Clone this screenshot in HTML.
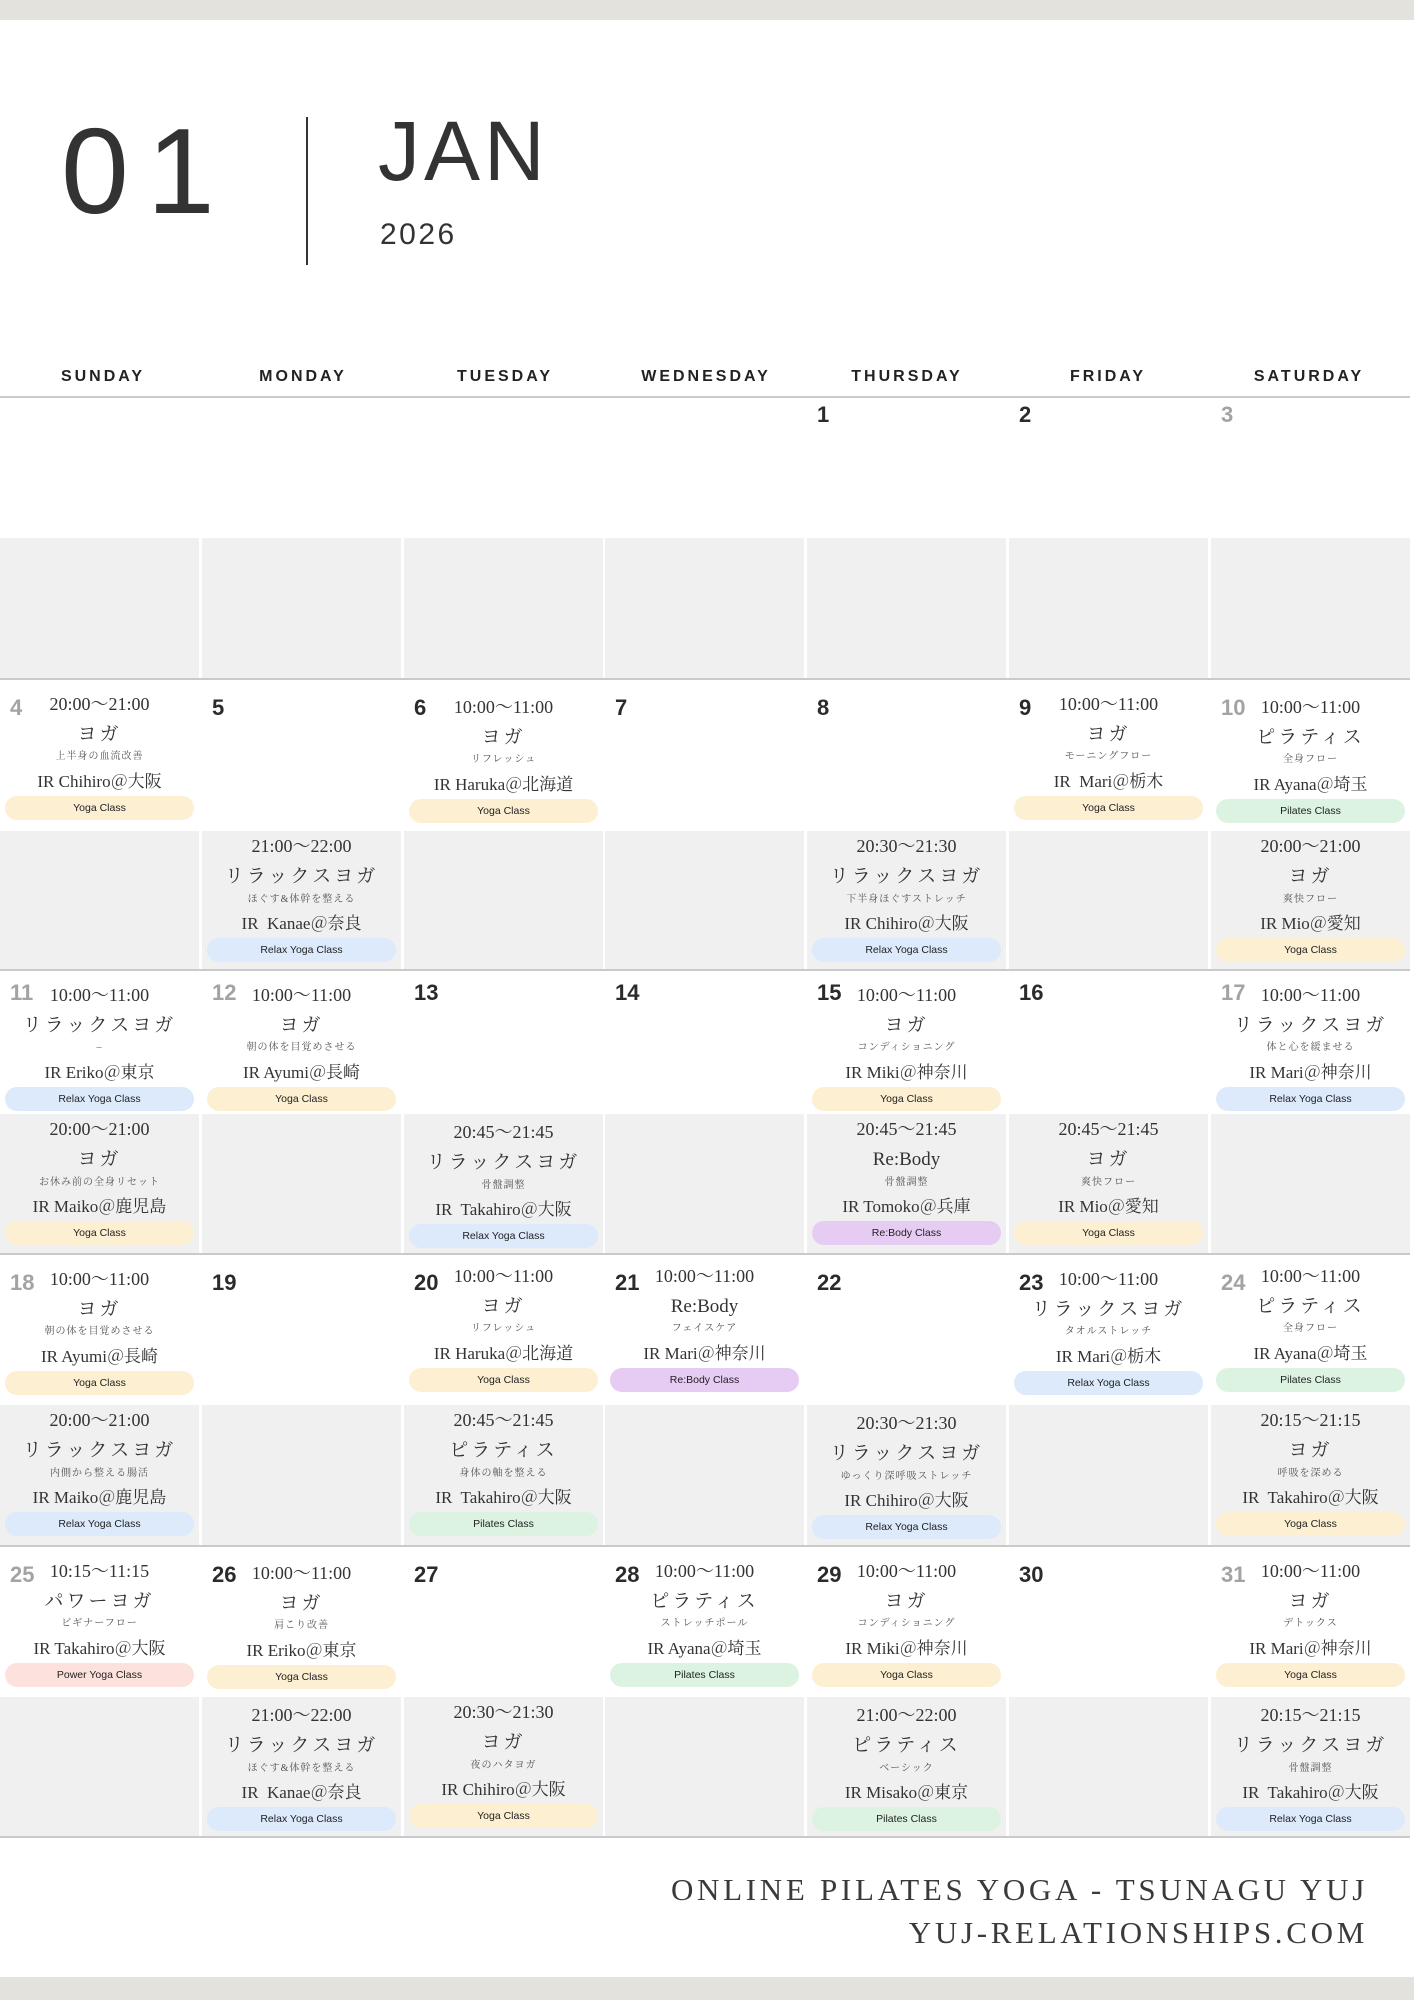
<!DOCTYPE html>
<html><head><meta charset="utf-8">
<style>
*{margin:0;padding:0;box-sizing:border-box}
body{width:1414px;height:2000px;position:relative;background:#fff;overflow:hidden;font-family:"Liberation Sans","Noto Sans CJK JP",sans-serif;color:#333}
.band{position:absolute;left:0;width:1414px;background:#e3e2dd}
.big{position:absolute;font-family:"Liberation Sans",sans-serif;color:#333;font-weight:normal;white-space:nowrap}
.dh{position:absolute;top:368px;width:200px;text-align:center;font-size:16px;font-weight:bold;letter-spacing:3px;color:#222}
.ln{position:absolute;left:0;width:1410px;height:2px;background:#cacaca}
.s{position:absolute;width:199px}
.g{background:#f0f0f0}
.s div{position:absolute;left:0;width:199px;text-align:center;white-space:nowrap;font-family:"Liberation Serif","Noto Serif CJK JP",serif;color:#333}
.t{font-size:18px;line-height:22px}
.n{font-size:19px;line-height:22px;letter-spacing:3px}
.u{font-size:10px;line-height:14px;letter-spacing:1px;color:#555!important}
.i{font-size:17px;line-height:22px}
.s div.p{left:5px;width:189px;height:24px;line-height:24px;border-radius:12px;font-family:"Liberation Sans",sans-serif;font-size:10.5px;color:#222}
.top .t{top:12px}.top .n{top:43px}.top .u{top:69px}.top .i{top:90px}.top .p{top:115px}
.bot .t{top:4px}.bot .n{top:35px}.bot .u{top:62px}.bot .i{top:82px}.bot .p{top:107px}
.Y{background:#fdefd2}.R{background:#dceafc}.P{background:#dcf3e2}.B{background:#e6cbf2}.W{background:#fde1dc}
.d{position:absolute;font-size:22px;font-weight:bold;color:#2b2b2b;font-family:"Liberation Sans",sans-serif}
.d.h{color:#a3a3a3}
.ft{position:absolute;right:46px;font-family:"Liberation Serif",serif;font-size:31px;letter-spacing:3.7px;color:#3a3a3a;text-align:right;white-space:nowrap}
</style></head><body>
<div class="band" style="top:0;height:20px"></div>
<div class="band" style="top:1977px;height:23px"></div>

<div class="big" style="left:61px;top:110px;font-size:122px;letter-spacing:18px;line-height:122px">01</div>
<div style="position:absolute;left:306px;top:117px;width:2px;height:148px;background:#333"></div>
<div class="big" style="left:378px;top:106px;font-size:84px;letter-spacing:4px;line-height:90px">JAN</div>
<div class="big" style="left:380px;top:218px;font-size:30px;letter-spacing:2.5px;line-height:34px">2026</div>

<div class="dh" style="left:3px">SUNDAY</div>
<div class="dh" style="left:203px">MONDAY</div>
<div class="dh" style="left:405px">TUESDAY</div>
<div class="dh" style="left:606px">WEDNESDAY</div>
<div class="dh" style="left:807px">THURSDAY</div>
<div class="dh" style="left:1008px">FRIDAY</div>
<div class="dh" style="left:1209px">SATURDAY</div>
<div class="ln" style="top:396px"></div>

<div class="s g" style="left:0;top:538px;height:140px"></div><div class="s g" style="left:202px;top:538px;height:140px"></div><div class="s g" style="left:404px;top:538px;height:140px"></div><div class="s g" style="left:605px;top:538px;height:140px"></div><div class="s g" style="left:807px;top:538px;height:140px"></div><div class="s g" style="left:1009px;top:538px;height:140px"></div><div class="s g" style="left:1211px;top:538px;height:140px"></div>
<div class="s g" style="left:0;top:831px;height:138px"></div><div class="s g" style="left:202px;top:831px;height:138px"></div><div class="s g" style="left:404px;top:831px;height:138px"></div><div class="s g" style="left:605px;top:831px;height:138px"></div><div class="s g" style="left:807px;top:831px;height:138px"></div><div class="s g" style="left:1009px;top:831px;height:138px"></div><div class="s g" style="left:1211px;top:831px;height:138px"></div>
<div class="s g" style="left:0;top:1114px;height:139px"></div><div class="s g" style="left:202px;top:1114px;height:139px"></div><div class="s g" style="left:404px;top:1114px;height:139px"></div><div class="s g" style="left:605px;top:1114px;height:139px"></div><div class="s g" style="left:807px;top:1114px;height:139px"></div><div class="s g" style="left:1009px;top:1114px;height:139px"></div><div class="s g" style="left:1211px;top:1114px;height:139px"></div>
<div class="s g" style="left:0;top:1405px;height:140px"></div><div class="s g" style="left:202px;top:1405px;height:140px"></div><div class="s g" style="left:404px;top:1405px;height:140px"></div><div class="s g" style="left:605px;top:1405px;height:140px"></div><div class="s g" style="left:807px;top:1405px;height:140px"></div><div class="s g" style="left:1009px;top:1405px;height:140px"></div><div class="s g" style="left:1211px;top:1405px;height:140px"></div>
<div class="s g" style="left:0;top:1697px;height:139px"></div><div class="s g" style="left:202px;top:1697px;height:139px"></div><div class="s g" style="left:404px;top:1697px;height:139px"></div><div class="s g" style="left:605px;top:1697px;height:139px"></div><div class="s g" style="left:807px;top:1697px;height:139px"></div><div class="s g" style="left:1009px;top:1697px;height:139px"></div><div class="s g" style="left:1211px;top:1697px;height:139px"></div>

<div class="ln" style="top:678px"></div><div class="ln" style="top:969px"></div><div class="ln" style="top:1253px"></div><div class="ln" style="top:1545px"></div><div class="ln" style="top:1836px"></div>

<div class="d" style="left:817px;top:402px">1</div>
<div class="d" style="left:1019px;top:402px">2</div>
<div class="d h" style="left:1221px;top:402px">3</div>

<div class="d h" style="left:10px;top:695px">4</div>
<div class="d" style="left:212px;top:695px">5</div>
<div class="d" style="left:414px;top:695px">6</div>
<div class="d" style="left:615px;top:695px">7</div>
<div class="d" style="left:817px;top:695px">8</div>
<div class="d" style="left:1019px;top:695px">9</div>
<div class="d h" style="left:1221px;top:695px">10</div>
<div class="s top" style="left:0;top:681px"><div class="t">20:00～21:00</div><div class="n">ヨガ</div><div class="u">上半身の血流改善</div><div class="i">IR Chihiro＠大阪</div><div class="p Y">Yoga Class</div></div>
<div class="s top" style="left:404px;top:684px"><div class="t">10:00～11:00</div><div class="n">ヨガ</div><div class="u">リフレッシュ</div><div class="i">IR Haruka＠北海道</div><div class="p Y">Yoga Class</div></div>
<div class="s top" style="left:1009px;top:681px"><div class="t">10:00～11:00</div><div class="n">ヨガ</div><div class="u">モーニングフロー</div><div class="i">IR&nbsp; Mari＠栃木</div><div class="p Y">Yoga Class</div></div>
<div class="s top" style="left:1211px;top:684px"><div class="t">10:00～11:00</div><div class="n">ピラティス</div><div class="u">全身フロー</div><div class="i">IR Ayana＠埼玉</div><div class="p P">Pilates Class</div></div>
<div class="s bot" style="left:202px;top:831px"><div class="t">21:00～22:00</div><div class="n">リラックスヨガ</div><div class="u">ほぐす&amp;体幹を整える</div><div class="i">IR&nbsp; Kanae＠奈良</div><div class="p R">Relax Yoga Class</div></div>
<div class="s bot" style="left:807px;top:831px"><div class="t">20:30～21:30</div><div class="n">リラックスヨガ</div><div class="u">下半身ほぐすストレッチ</div><div class="i">IR Chihiro＠大阪</div><div class="p R">Relax Yoga Class</div></div>
<div class="s bot" style="left:1211px;top:831px"><div class="t">20:00～21:00</div><div class="n">ヨガ</div><div class="u">爽快フロー</div><div class="i">IR Mio＠愛知</div><div class="p Y">Yoga Class</div></div>

<div class="d h" style="left:10px;top:980px">11</div>
<div class="d h" style="left:212px;top:980px">12</div>
<div class="d" style="left:414px;top:980px">13</div>
<div class="d" style="left:615px;top:980px">14</div>
<div class="d" style="left:817px;top:980px">15</div>
<div class="d" style="left:1019px;top:980px">16</div>
<div class="d h" style="left:1221px;top:980px">17</div>
<div class="s top" style="left:0;top:972px"><div class="t">10:00～11:00</div><div class="n">リラックスヨガ</div><div class="u">–</div><div class="i">IR Eriko＠東京</div><div class="p R">Relax Yoga Class</div></div>
<div class="s top" style="left:202px;top:972px"><div class="t">10:00～11:00</div><div class="n">ヨガ</div><div class="u">朝の体を目覚めさせる</div><div class="i">IR Ayumi＠長崎</div><div class="p Y">Yoga Class</div></div>
<div class="s top" style="left:807px;top:972px"><div class="t">10:00～11:00</div><div class="n">ヨガ</div><div class="u">コンディショニング</div><div class="i">IR Miki＠神奈川</div><div class="p Y">Yoga Class</div></div>
<div class="s top" style="left:1211px;top:972px"><div class="t">10:00～11:00</div><div class="n">リラックスヨガ</div><div class="u">体と心を緩ませる</div><div class="i">IR Mari＠神奈川</div><div class="p R">Relax Yoga Class</div></div>
<div class="s bot" style="left:0;top:1114px"><div class="t">20:00～21:00</div><div class="n">ヨガ</div><div class="u">お休み前の全身リセット</div><div class="i">IR Maiko＠鹿児島</div><div class="p Y">Yoga Class</div></div>
<div class="s bot" style="left:404px;top:1117px"><div class="t">20:45～21:45</div><div class="n">リラックスヨガ</div><div class="u">骨盤調整</div><div class="i">IR&nbsp; Takahiro＠大阪</div><div class="p R">Relax Yoga Class</div></div>
<div class="s bot" style="left:807px;top:1114px"><div class="t">20:45～21:45</div><div class="n" style="letter-spacing:0">Re:Body</div><div class="u">骨盤調整</div><div class="i">IR Tomoko＠兵庫</div><div class="p B">Re:Body Class</div></div>
<div class="s bot" style="left:1009px;top:1114px"><div class="t">20:45～21:45</div><div class="n">ヨガ</div><div class="u">爽快フロー</div><div class="i">IR Mio＠愛知</div><div class="p Y">Yoga Class</div></div>

<div class="d h" style="left:10px;top:1270px">18</div>
<div class="d" style="left:212px;top:1270px">19</div>
<div class="d" style="left:414px;top:1270px">20</div>
<div class="d" style="left:615px;top:1270px">21</div>
<div class="d" style="left:817px;top:1270px">22</div>
<div class="d" style="left:1019px;top:1270px">23</div>
<div class="d h" style="left:1221px;top:1270px">24</div>
<div class="s top" style="left:0;top:1256px"><div class="t">10:00～11:00</div><div class="n">ヨガ</div><div class="u">朝の体を目覚めさせる</div><div class="i">IR Ayumi＠長崎</div><div class="p Y">Yoga Class</div></div>
<div class="s top" style="left:404px;top:1253px"><div class="t">10:00～11:00</div><div class="n">ヨガ</div><div class="u">リフレッシュ</div><div class="i">IR Haruka＠北海道</div><div class="p Y">Yoga Class</div></div>
<div class="s top" style="left:605px;top:1253px"><div class="t">10:00～11:00</div><div class="n" style="letter-spacing:0">Re:Body</div><div class="u">フェイスケア</div><div class="i">IR Mari＠神奈川</div><div class="p B">Re:Body Class</div></div>
<div class="s top" style="left:1009px;top:1256px"><div class="t">10:00～11:00</div><div class="n">リラックスヨガ</div><div class="u">タオルストレッチ</div><div class="i">IR Mari＠栃木</div><div class="p R">Relax Yoga Class</div></div>
<div class="s top" style="left:1211px;top:1253px"><div class="t">10:00～11:00</div><div class="n">ピラティス</div><div class="u">全身フロー</div><div class="i">IR Ayana＠埼玉</div><div class="p P">Pilates Class</div></div>
<div class="s bot" style="left:0;top:1405px"><div class="t">20:00～21:00</div><div class="n">リラックスヨガ</div><div class="u">内側から整える腸活</div><div class="i">IR Maiko＠鹿児島</div><div class="p R">Relax Yoga Class</div></div>
<div class="s bot" style="left:404px;top:1405px"><div class="t">20:45～21:45</div><div class="n">ピラティス</div><div class="u">身体の軸を整える</div><div class="i">IR&nbsp; Takahiro＠大阪</div><div class="p P">Pilates Class</div></div>
<div class="s bot" style="left:807px;top:1408px"><div class="t">20:30～21:30</div><div class="n">リラックスヨガ</div><div class="u">ゆっくり深呼吸ストレッチ</div><div class="i">IR Chihiro＠大阪</div><div class="p R">Relax Yoga Class</div></div>
<div class="s bot" style="left:1211px;top:1405px"><div class="t">20:15～21:15</div><div class="n">ヨガ</div><div class="u">呼吸を深める</div><div class="i">IR&nbsp; Takahiro＠大阪</div><div class="p Y">Yoga Class</div></div>

<div class="d h" style="left:10px;top:1562px">25</div>
<div class="d" style="left:212px;top:1562px">26</div>
<div class="d" style="left:414px;top:1562px">27</div>
<div class="d" style="left:615px;top:1562px">28</div>
<div class="d" style="left:817px;top:1562px">29</div>
<div class="d" style="left:1019px;top:1562px">30</div>
<div class="d h" style="left:1221px;top:1562px">31</div>
<div class="s top" style="left:0;top:1548px"><div class="t">10:15～11:15</div><div class="n">パワーヨガ</div><div class="u">ビギナーフロー</div><div class="i">IR Takahiro＠大阪</div><div class="p W">Power Yoga Class</div></div>
<div class="s top" style="left:202px;top:1550px"><div class="t">10:00～11:00</div><div class="n">ヨガ</div><div class="u">肩こり改善</div><div class="i">IR Eriko＠東京</div><div class="p Y">Yoga Class</div></div>
<div class="s top" style="left:605px;top:1548px"><div class="t">10:00～11:00</div><div class="n">ピラティス</div><div class="u">ストレッチポール</div><div class="i">IR Ayana＠埼玉</div><div class="p P">Pilates Class</div></div>
<div class="s top" style="left:807px;top:1548px"><div class="t">10:00～11:00</div><div class="n">ヨガ</div><div class="u">コンディショニング</div><div class="i">IR Miki＠神奈川</div><div class="p Y">Yoga Class</div></div>
<div class="s top" style="left:1211px;top:1548px"><div class="t">10:00～11:00</div><div class="n">ヨガ</div><div class="u">デトックス</div><div class="i">IR Mari＠神奈川</div><div class="p Y">Yoga Class</div></div>
<div class="s bot" style="left:202px;top:1700px"><div class="t">21:00～22:00</div><div class="n">リラックスヨガ</div><div class="u">ほぐす&amp;体幹を整える</div><div class="i">IR&nbsp; Kanae＠奈良</div><div class="p R">Relax Yoga Class</div></div>
<div class="s bot" style="left:404px;top:1697px"><div class="t">20:30～21:30</div><div class="n">ヨガ</div><div class="u">夜のハタヨガ</div><div class="i">IR Chihiro＠大阪</div><div class="p Y">Yoga Class</div></div>
<div class="s bot" style="left:807px;top:1700px"><div class="t">21:00～22:00</div><div class="n">ピラティス</div><div class="u">ベーシック</div><div class="i">IR Misako＠東京</div><div class="p P">Pilates Class</div></div>
<div class="s bot" style="left:1211px;top:1700px"><div class="t">20:15～21:15</div><div class="n">リラックスヨガ</div><div class="u">骨盤調整</div><div class="i">IR&nbsp; Takahiro＠大阪</div><div class="p R">Relax Yoga Class</div></div>

<div class="ft" style="top:1872px">ONLINE PILATES YOGA - TSUNAGU YUJ</div>
<div class="ft" style="top:1915px">YUJ-RELATIONSHIPS.COM</div>
</body></html>
